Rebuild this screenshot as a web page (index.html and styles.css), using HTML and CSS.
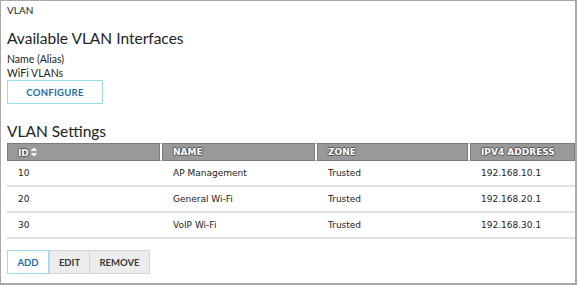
FILE: index.html
```html
<!DOCTYPE html>
<html>
<head>
<meta charset="utf-8">
<link rel="stylesheet" href="styles.css">
</head>
<body>
<div class="frame">
  <div class="crumb">VLAN</div>
  <h2 class="title">Available VLAN Interfaces</h2>
  <div class="label">Name (Alias)</div>
  <div class="label">WiFi VLANs</div>
  <button class="btn btn-primary configure">CONFIGURE</button>
  <h2 class="title settings">VLAN Settings</h2>
  <table class="grid">
    <colgroup>
      <col class="c1"><col class="c2"><col class="c3"><col class="c4">
    </colgroup>
    <thead>
      <tr>
        <th>ID<span class="sort"><svg width="8" height="10" viewBox="0 0 8 10"><path d="M4 0.5 L7.5 4 L0.5 4 Z" fill="#f4f4f4"/><path d="M4 9.5 L7.5 6 L0.5 6 Z" fill="#f4f4f4"/></svg></span></th>
        <th>NAME</th>
        <th>ZONE</th>
        <th>IPV4 ADDRESS</th>
      </tr>
    </thead>
    <tbody>
      <tr><td>10</td><td>AP Management</td><td>Trusted</td><td>192.168.10.1</td></tr>
      <tr><td>20</td><td>General Wi-Fi</td><td>Trusted</td><td>192.168.20.1</td></tr>
      <tr><td>30</td><td>VoIP Wi-Fi</td><td>Trusted</td><td>192.168.30.1</td></tr>
    </tbody>
  </table>
  <div class="actions">
    <button class="btn btn-primary">ADD</button>
    <button class="btn btn-gray">EDIT</button>
    <button class="btn btn-gray">REMOVE</button>
  </div>
</div>
</body>
</html>
```
FILE: styles.css
```css
html, body {
  margin: 0;
  padding: 0;
  background: #fff;
}
.frame {
  width: 577px;
  height: 285px;
  box-sizing: border-box;
  border: 1px solid #a8a8a8;
  border-right-width: 2px;
  border-bottom-width: 2px;
  padding: 3px 0 0 6px;
  font-family: Lato, sans-serif;
  color: #222;
}
.crumb {
  font-size: 10px;
  line-height: 13px;
}
.title {
  margin: 10px 0 0 0;
  font-family: Lato, sans-serif;
  font-weight: 400;
  font-size: 15.5px;
  line-height: 22px;
  color: #222;
}
.label {
  font-size: 10.5px;
  line-height: 14px;
}
.title + .label {
  margin-top: 3px;
}
.btn {
  font-family: Lato, sans-serif;
  font-size: 9.5px;
  font-weight: 700;
  height: 24px;
  padding: 0;
  margin: 0;
  box-sizing: border-box;
  cursor: pointer;
}
.btn-primary {
  background: #fff;
  border: 1.5px solid #9fdbee;
  color: #1b6fa8;
}
.btn-gray {
  background: #ececec;
  border: 1px solid #d6d6d6;
  color: #3a3a3a;
}
.configure {
  display: block;
  width: 96px;
  margin-top: 0;
  letter-spacing: 0.3px;
}
.settings {
  margin-top: 16px;
}
.grid {
  margin-top: 1px;
  width: 568px;
  border-collapse: separate;
  border-spacing: 0;
  table-layout: fixed;
}
.c1 { width: 155px; }
.c2 { width: 155px; }
.c3 { width: 153px; }
.c4 { width: 105px; }
.grid th {
  height: 18px;
  box-sizing: border-box;
  background: #999;
  border: 1px solid #7b7b7b;
  border-right: 2px solid #fff;
  box-shadow: inset -1px 0 0 #7b7b7b;
  padding: 0 0 0 10px;
  text-align: left;
  font-family: "DejaVu Sans", sans-serif;
  font-size: 9px;
  font-weight: 700;
  color: #fff;
  text-shadow: -1px 0 0 #555, 1px 0 0 #555, 0 -1px 0 #555, 0 1px 0 #555;
  white-space: nowrap;
}
.grid th:last-child {
  border-right: 1px solid #7b7b7b;
  box-shadow: none;
}
.sort {
  display: inline-block;
  vertical-align: -1px;
  margin-left: 1px;
}
.sort svg { display: block; }
.grid td {
  height: 26px;
  box-sizing: border-box;
  padding: 0 0 0 11px;
  border-bottom: 2px solid #e0e0e0;
  font-family: "DejaVu Sans", sans-serif;
  font-size: 9px;
  color: #222;
  white-space: nowrap;
}
.actions {
  display: flex;
  margin-top: 11px;
}
.actions .btn-primary { width: 42px; }
.actions .btn-gray:nth-child(2) { width: 41px; }
.actions .btn-gray:nth-child(3) { width: 60px; border-left: none; }
```
